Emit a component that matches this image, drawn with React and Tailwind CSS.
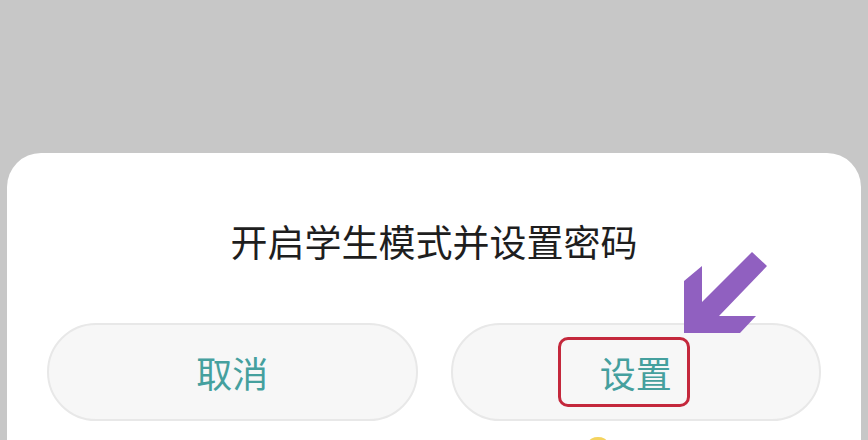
import React from "react";

export default function App() {
  return (
    <div
      className="relative w-[868px] h-[440px] overflow-hidden bg-[#c7c7c7] pt-[153px] px-[7px]"
      style={{ fontFamily: '"Noto Sans CJK SC", "Noto Sans", sans-serif' }}
    >
      <div className="h-[300px] bg-white rounded-t-[34px] flex flex-col items-center">
        <div className="mt-[66px] text-[37px] leading-[44px] text-[#1e1e1e]">
          开启学生模式并设置密码
        </div>
        <div className="mt-[60px] w-full px-[40px] grid grid-cols-2 gap-[33px]">
          <div className="h-[98px] rounded-full bg-[#f7f7f7] border-2 border-[#e8e8e8] flex items-center justify-center text-[36px] text-[#45a09e]">
            取消
          </div>
          <div className="relative h-[98px] rounded-full bg-[#f7f7f7] border-2 border-[#e8e8e8] flex items-center justify-center text-[36px] text-[#45a09e]">
            设置
            <div className="absolute left-[105px] top-[12px] w-[132px] h-[70px] rounded-[10px] border-[3px] border-[#c4283c]" />
          </div>
        </div>
      </div>
      <svg
        className="absolute left-0 top-0"
        width="868"
        height="440"
        viewBox="0 0 868 440"
      >
        <polygon
          points="684,281 702,266 702,302 752,252 767,266 719,316 756,316 740,333 684,333"
          fill="#9060c0"
        />
        <ellipse cx="598" cy="442" rx="9" ry="5" fill="#f4d35e" />
      </svg>
    </div>
  );
}
